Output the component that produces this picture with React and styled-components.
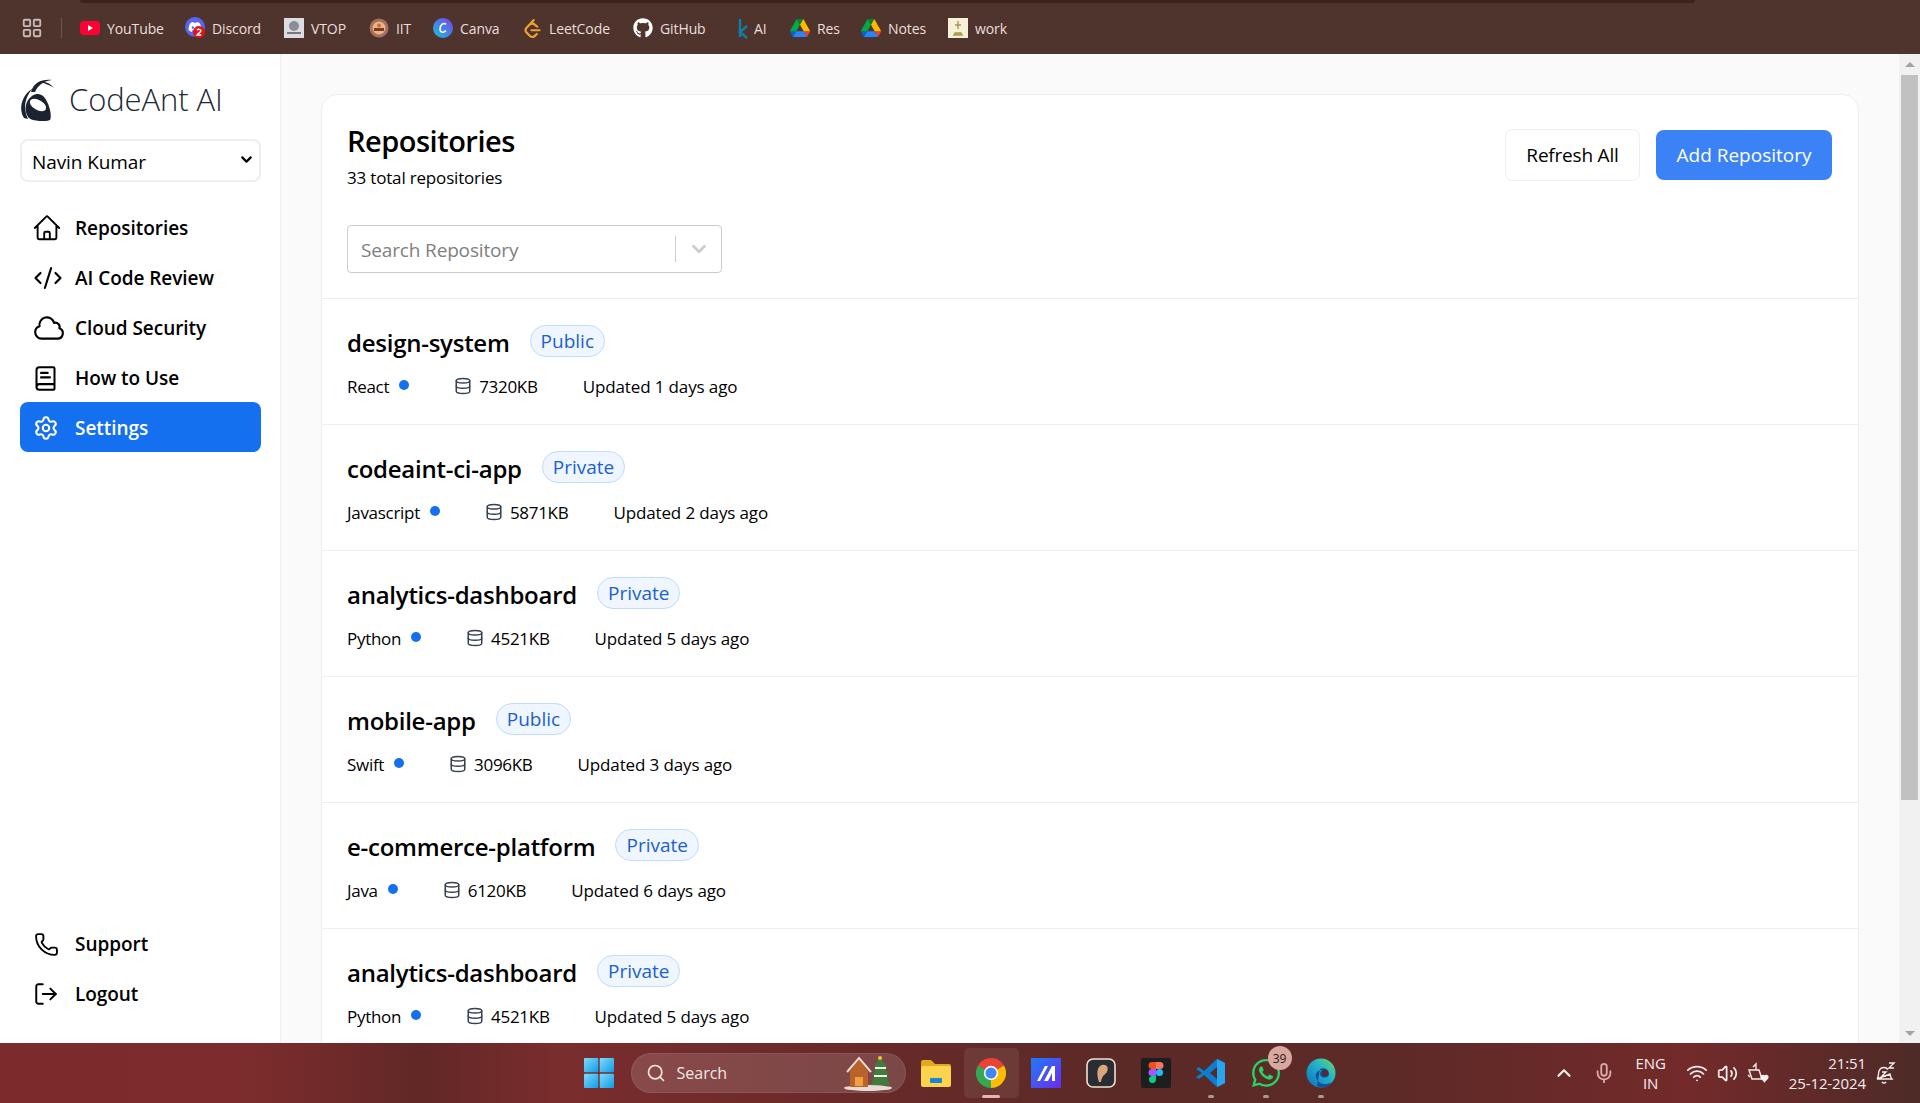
import React from "react";
import styled, { createGlobalStyle } from "styled-components";
import {
  CodeXml,
  BookText,
  Settings,
  Phone,
  LogOut,
  Database,
  ChevronUp,
  ChevronDown,
  Mic,
  Wifi,
  Volume2,
  Search,
  LayoutGrid,
} from "lucide-react";
import { HiOutlineHome, HiOutlineCloud } from "react-icons/hi2";
import { FaGithub, FaDiscord, FaWhatsapp } from "react-icons/fa";
import { SiLeetcode } from "react-icons/si";

const FONT = `"Open Sans", "Noto Sans", "Liberation Sans", sans-serif`;

const GlobalStyle = createGlobalStyle`
  html, body {
    margin: 0;
    height: 100%;
    overflow: hidden;
    font-family: ${FONT};
    color: #000;
  }
  * { box-sizing: border-box; }
`;

const Page = styled.div`
  display: flex;
  flex-direction: column;
  width: 100vw;
  height: 100vh;
  overflow: hidden;
`;

/* browser bookmarks bar */
const TopBar = styled.div`
  position: relative;
  flex: 0 0 54px;
  display: flex;
  align-items: center;
  padding: 2px 0 0 21px;
  background: #4f342e;
`;

const TabEdge = styled.div`
  position: absolute;
  top: 0;
  left: 80px;
  width: 1615px;
  height: 3px;
  background: #3a221d;
  border-radius: 0 0 6px 6px;
`;

const AppsDivider = styled.div`
  width: 1px;
  height: 20px;
  margin: 0 18px 0 18px;
  background: #6e5650;
`;

const Bookmark = styled.div`
  flex: 0 0 ${(p) => p.$w}px;
  display: flex;
  align-items: center;
  gap: ${(p) => p.$gap ?? 7}px;
  font-size: 14px;
  letter-spacing: -0.1px;
  color: #e9dfdc;
  white-space: nowrap;
`;

const BookmarkIcon = styled.span`
  flex: 0 0 20px;
  width: 20px;
  height: 20px;
  display: flex;
  align-items: center;
  justify-content: center;
`;

const Body = styled.div`
  flex: 1;
  min-height: 0;
  display: flex;
`;

const Sidebar = styled.aside`
  flex: 0 0 281px;
  display: flex;
  flex-direction: column;
  padding: 20px 19px 25px 20px;
  background: #fff;
  border-right: 1px solid #eeeeee;
`;

const Brand = styled.div`
  display: flex;
  align-items: center;
  gap: 11px;
  height: 50px;
  margin-left: -2px;
  font-size: 31px;
  font-weight: 300;
  letter-spacing: -0.1px;
  color: #1f2937;
`;

const SelectWrap = styled.div`
  position: relative;
  width: 241px;
  height: 43px;
  margin-top: 15px;
  margin-bottom: 20px;
`;

const AccountSelect = styled.select`
  appearance: none;
  width: 100%;
  height: 100%;
  padding: 2px 24px 0 10px;
  background: #fff;
  border: 2px solid #eeeeee;
  border-radius: 8px;
  font-family: ${FONT};
  font-size: 19px;
  letter-spacing: -0.1px;
  color: #000;
`;

const SelectArrow = styled.span`
  position: absolute;
  top: 12px;
  right: 6px;
  display: flex;
  pointer-events: none;
`;

const Nav = styled.nav`
  display: flex;
  flex-direction: column;
`;

const NavItem = styled.div`
  display: flex;
  align-items: center;
  height: 50px;
  padding: 2px 0 0 15px;
  border-radius: 8px;
  font-size: 19px;
  font-weight: 600;
  letter-spacing: -0.05px;
  color: ${(p) => (p.$active ? "#fff" : "#000")};
  background: ${(p) => (p.$active ? "#1570ef" : "transparent")};
`;

const NavIcon = styled.span`
  flex: 0 0 ${(p) => 40 + (p.$pull ?? 3)}px;
  margin-left: ${(p) => -(p.$pull ?? 3)}px;
  display: flex;
  align-items: center;
`;

const SidebarFoot = styled(Nav)`
  margin-top: auto;
`;

const Main = styled.main`
  flex: 1;
  min-width: 0;
  padding: 40px 40px 0 40px;
  background: #fafafa;
  overflow: hidden;
`;

const Card = styled.section`
  background: #fff;
  border: 1px solid #eeeeee;
  border-radius: 16px;
`;

const CardHeader = styled.header`
  padding: 28px 26px 25px 25px;
`;

const HeaderTop = styled.div`
  display: flex;
  justify-content: space-between;
  align-items: flex-start;
`;

const Title = styled.h1`
  margin: 0;
  font-size: 29px;
  line-height: 36px;
  font-weight: 600;
  letter-spacing: -0.5px;
`;

const Subtitle = styled.p`
  margin: 7px 0 0;
  font-size: 17px;
  line-height: 24px;
  letter-spacing: -0.18px;
`;

const Actions = styled.div`
  display: flex;
  align-items: center;
  gap: 16px;
  margin-top: 6px;
`;

const Button = styled.button`
  height: ${(p) => (p.$primary ? 50 : 52)}px;
  width: ${(p) => (p.$primary ? 176 : 135)}px;
  padding: 0;
  border: ${(p) => (p.$primary ? "none" : "1px solid #eeeeee")};
  border-radius: 8px;
  background: ${(p) => (p.$primary ? "#3b82f6" : "#fff")};
  color: ${(p) => (p.$primary ? "#fff" : "#000")};
  font-family: ${FONT};
  font-size: 19px;
  letter-spacing: ${(p) => (p.$primary ? "0" : "-0.2px")};
`;

const SearchBox = styled.div`
  display: flex;
  align-items: center;
  width: 375px;
  height: 48px;
  margin-top: 35px;
  padding: 2px 0 0 13px;
  border: 1px solid #cccccc;
  border-radius: 4px;
  font-size: 19px;
  letter-spacing: -0.15px;
  color: #808080;
`;

const SearchText = styled.span`
  flex: 1;
`;

const SearchSep = styled.span`
  width: 1px;
  height: 26px;
  margin-top: -2px;
  background: #cccccc;
`;

const SearchArrow = styled.span`
  flex: 0 0 45px;
  display: flex;
  justify-content: center;
  margin-top: -2px;
  color: #cccccc;
`;

const Row = styled.article`
  padding: 26px 25px 24px;
  border-top: 1px solid #eeeeee;
`;

const RowTitle = styled.div`
  display: flex;
  align-items: center;
  height: 32px;
  gap: 20px;
`;

const RepoName = styled.h2`
  margin: 2px 0 0;
  font-size: 24px;
  font-weight: 600;
  letter-spacing: -0.25px;
`;

const Badge = styled.span`
  display: inline-flex;
  align-items: center;
  height: 32px;
  padding: 0 10px;
  border: 1px solid #bfdbfe;
  border-radius: 16px;
  background: #eff6ff;
  color: #1d5fd0;
  font-size: 19px;
`;

const Meta = styled.div`
  display: flex;
  align-items: center;
  height: 28px;
  margin-top: 15px;
  gap: 45px;
  font-size: 17px;
  letter-spacing: -0.3px;
`;

const MetaPart = styled.span`
  display: inline-flex;
  align-items: center;
  gap: ${(p) => p.$gap || 10}px;
`;

const Updated = styled.span`
  letter-spacing: -0.13px;
`;

const Dot = styled.span`
  width: 10px;
  height: 10px;
  margin-top: -2px;
  border-radius: 50%;
  background: #1570ef;
`;

const Scrollbar = styled.div`
  flex: 0 0 21px;
  display: flex;
  flex-direction: column;
  align-items: center;
  background: #f1f1f1;
  padding: 8px 0 7px;
`;

const ScrollArrow = styled.div`
  width: 0;
  height: 0;
  border-left: 5px solid transparent;
  border-right: 5px solid transparent;
  border-${(p) => (p.$down ? "top" : "bottom")}: 5px solid #a3a3a3;
`;

const ScrollThumb = styled.div`
  width: 17px;
  height: 725px;
  margin-top: 8px;
  margin-bottom: auto;
  background: #c1c1c1;
`;

/* windows taskbar */
const Taskbar = styled.footer`
  flex: 0 0 60px;
  display: grid;
  grid-template-columns: 1fr auto 1fr;
  align-items: center;
  background: linear-gradient(
    90deg,
    #7b2b2b 0%,
    #7c2c2c 13%,
    #612826 22%,
    #7a2d2d 29%,
    #682a29 45%,
    #5b2a27 58%,
    #5c2a27 72%,
    #732a2a 88%,
    #4d2b28 100%
  );
  color: #fff;
`;

const TaskCenter = styled.div`
  grid-column: 2;
  display: flex;
  align-items: center;
  height: 60px;
  padding-left: 12px;
`;

const TaskSearch = styled.div`
  display: flex;
  align-items: center;
  width: 275px;
  height: 40px;
  margin: 0 3px 0 17px;
  padding: 0 12px 0 14px;
  gap: 11px;
  border-radius: 20px;
  background: rgba(255, 255, 255, 0.14);
  border: 1px solid rgba(255, 255, 255, 0.08);
  font-size: 16px;
  color: #f3e6e4;
`;

const TaskSearchText = styled.span`
  flex: 1;
`;

const TaskSlot = styled.div`
  position: relative;
  flex: 0 0 55px;
  height: 50px;
  display: flex;
  align-items: center;
  justify-content: center;
  border-radius: 5px;
  background: ${(p) => (p.$active ? "rgba(255,255,255,0.08)" : "transparent")};
`;

const RunMark = styled.span`
  position: absolute;
  bottom: 0;
  left: 50%;
  transform: translateX(-50%);
  width: ${(p) => (p.$active ? 18 : 6)}px;
  height: 3px;
  border-radius: 2px;
  background: ${(p) => (p.$active ? "#e6b5ae" : "#a89a98")};
`;

const CountBadge = styled.span`
  position: absolute;
  top: -2px;
  right: 2px;
  width: 24px;
  height: 24px;
  display: flex;
  align-items: center;
  justify-content: center;
  border-radius: 50%;
  background: #d9a79f;
  color: #2a1a18;
  font-size: 12px;
`;

const Tray = styled.div`
  grid-column: 3;
  display: flex;
  align-items: center;
  justify-content: flex-end;
  padding-right: 24px;
  color: #f5eeee;
`;

const TrayIcon = styled.span`
  display: flex;
  align-items: center;
  justify-content: center;
  margin-left: ${(p) => p.$ml || 0}px;
`;

const TrayText = styled.div`
  display: flex;
  flex-direction: column;
  align-items: ${(p) => p.$align || "center"};
  margin-left: ${(p) => p.$ml || 0}px;
  font-size: 15px;
  line-height: 20px;
  letter-spacing: -0.1px;
`;

const DriveIcon = () => (
  <svg width="20" height="18" viewBox="0 0 87.3 78">
    <path d="m6.6 66.85 3.85 6.65c.8 1.4 1.95 2.5 3.3 3.3l13.75-23.8h-27.5c0 1.55.4 3.1 1.2 4.5z" fill="#0066da" />
    <path d="m43.65 25-13.75-23.8c-1.35.8-2.5 1.9-3.3 3.3l-25.4 44a9.06 9.06 0 0 0 -1.2 4.5h27.5z" fill="#00ac47" />
    <path d="m73.55 76.8c1.35-.8 2.5-1.9 3.3-3.3l1.6-2.75 7.65-13.25c.8-1.4 1.2-2.95 1.2-4.5h-27.502l5.852 11.5z" fill="#ea4335" />
    <path d="m43.65 25 13.75-23.8c-1.35-.8-2.9-1.2-4.5-1.2h-18.5c-1.6 0-3.15.45-4.5 1.2z" fill="#00832d" />
    <path d="m59.8 53h-32.3l-13.75 23.8c1.35.8 2.9 1.2 4.5 1.2h50.8c1.6 0 3.15-.45 4.5-1.2z" fill="#2684fc" />
    <path d="m73.4 26.5-12.7-22c-.8-1.4-1.95-2.5-3.3-3.3l-13.75 23.8 16.15 28h27.45c0-1.55-.4-3.1-1.2-4.5z" fill="#ffba00" />
  </svg>
);

const bookmarks = [
  {
    name: "YouTube",
    w: 105,
    icon: (
      <svg width="20" height="20" viewBox="0 0 20 20">
        <rect y="3" width="20" height="14" rx="4" fill="#ff0033" />
        <polygon points="8,7 8,13 13,10" fill="#fff" />
      </svg>
    ),
  },
  {
    name: "Discord",
    w: 99,
    icon: (
      <svg width="20" height="22" viewBox="0 0 20 22">
        <circle cx="10" cy="10" r="10" fill="#5865f2" />
        <FaDiscord x="3" y="3" size="14" color="#fff" />
        <circle cx="14" cy="15" r="6" fill="#e01414" />
        <path d="M12 13.2c.6-1.3 4-1.2 4 .6 0 1.4-3 2.4-4 4.2h4.2" fill="none" stroke="#fff" strokeWidth="1.4" />
      </svg>
    ),
  },
  {
    name: "VTOP",
    w: 85,
    icon: (
      <svg width="20" height="20" viewBox="0 0 20 20">
        <rect width="20" height="20" fill="#dcdce2" />
        <circle cx="10" cy="8" r="5" fill="#8d8d9a" />
        <rect x="3" y="14" width="14" height="2" fill="#777784" />
      </svg>
    ),
  },
  {
    name: "IIT",
    w: 64,
    icon: (
      <svg width="20" height="20" viewBox="0 0 20 20">
        <circle cx="10" cy="10" r="9.5" fill="#a5705c" />
        <circle cx="10" cy="10" r="6.5" fill="#e8b48a" />
        <rect x="5" y="10" width="10" height="3" fill="#7a3b20" />
        <circle cx="10" cy="7.5" r="2" fill="#d0702a" />
      </svg>
    ),
  },
  {
    name: "Canva",
    w: 89,
    icon: (
      <svg width="20" height="20" viewBox="0 0 20 20">
        <defs>
          <linearGradient id="canvaFill" x1="0" y1="1" x2="1" y2="0">
            <stop offset="0" stopColor="#17c3d6" />
            <stop offset="1" stopColor="#7b3ff2" />
          </linearGradient>
        </defs>
        <circle cx="10" cy="10" r="10" fill="url(#canvaFill)" />
        <path d="M13 6.5C11 3.8 7 6.8 7 11c0 3.6 3.5 4.2 6 1.500" fill="none" stroke="#fff" strokeWidth="1.5" />
      </svg>
    ),
  },
  {
    name: "LeetCode",
    w: 111,
    icon: <SiLeetcode size={19} color="#f0a030" />,
  },
  { name: "GitHub", w: 100, icon: <FaGithub size={20} color="#fff" /> },
  {
    name: "AI",
    w: 57,
    icon: (
      <svg width="20" height="22" viewBox="0 0 20 22">
        <path d="M7 2v18M14 9l-7 6 7 6" fill="none" stroke="#0f7fa8" strokeWidth="2.4" />
      </svg>
    ),
    gap: 1,
  },
  { name: "Res", w: 71, icon: <DriveIcon /> },
  { name: "Notes", w: 87, icon: <DriveIcon /> },
  {
    name: "work",
    w: 70,
    icon: (
      <svg width="20" height="20" viewBox="0 0 20 20">
        <rect width="20" height="20" fill="#f6f0d8" />
        <path d="M10 3v8M7 7h6M7 15h6l1 2H6z" stroke="#a8964e" strokeWidth="1.4" fill="#c9b877" />
      </svg>
    ),
  },
];

const navItems = [
  { label: "Repositories", icon: <HiOutlineHome size={30} /> },
  { label: "AI Code Review", icon: <CodeXml size={30} strokeWidth={1.7} />, pull: 2 },
  { label: "Cloud Security", icon: <HiOutlineCloud size={34} />, pull: 3 },
  { label: "How to Use", icon: <BookText size={27} strokeWidth={1.8} /> },
  { label: "Settings", icon: <Settings size={26} strokeWidth={1.9} />, pull: 2, active: true },
];

const repos = [
  { name: "design-system", vis: "Public", lang: "React", size: "7320KB", when: "1 days" },
  { name: "codeaint-ci-app", vis: "Private", lang: "Javascript", size: "5871KB", when: "2 days" },
  { name: "analytics-dashboard", vis: "Private", lang: "Python", size: "4521KB", when: "5 days" },
  { name: "mobile-app", vis: "Public", lang: "Swift", size: "3096KB", when: "3 days" },
  { name: "e-commerce-platform", vis: "Private", lang: "Java", size: "6120KB", when: "6 days" },
  { name: "analytics-dashboard", vis: "Private", lang: "Python", size: "4521KB", when: "5 days" },
];

const AntLogo = () => (
  <svg width="40" height="43" viewBox="18 78 40 43" fill="#1b2230">
    <path d="M26 112C24 103 30 95 37 94c7-1 11 8 13 16 1 4 1 8 0 10-6 2-12 1-17 0-4-1-6-4-7-8z" />
    <ellipse cx="38" cy="105" rx="9" ry="5" fill="#fff" transform="rotate(30 38 105)" />
    <path d="M24 118C18 108 22 95 33 88c-7 8-11 18-5 31z" />
    <path d="M31 92c3-10 11-13 21-12-8 1-14 5-17 12z" />
    <path d="M40 82c5-1 10 1 14 6-4-3-8-4-14-6z" />
  </svg>
);

const WindowsLogo = () => (
  <svg width="30" height="30" viewBox="0 0 30 30">
    <defs>
      <linearGradient id="winFill" x1="0" y1="0" x2="1" y2="1">
        <stop offset="0" stopColor="#7fdcf8" />
        <stop offset="1" stopColor="#0f9aeb" />
      </linearGradient>
    </defs>
    <rect width="14.3" height="14.3" rx="1" fill="url(#winFill)" />
    <rect x="15.7" width="14.3" height="14.3" rx="1" fill="url(#winFill)" />
    <rect y="15.7" width="14.3" height="14.3" rx="1" fill="url(#winFill)" />
    <rect x="15.7" y="15.7" width="14.3" height="14.3" rx="1" fill="url(#winFill)" />
  </svg>
);

const XmasDecor = () => (
  <svg width="50" height="36" viewBox="0 0 50 36">
    <ellipse cx="25" cy="33" rx="24" ry="3" fill="#e8dcd6" />
    <path d="M7 16L16 5l9 11v16H7z" fill="#b9622a" />
    <path d="M4 17L16 3l12 14" fill="none" stroke="#f1d9c8" strokeWidth="2" />
    <rect x="12" y="22" width="8" height="9" fill="#f0a040" />
    <path d="M37 2l7 10h-3l5 8h-3l4 10H28l4-10h-3l5-8h-3z" fill="#3f7d3a" />
    <path d="M32 13h11M31 21h13" stroke="#f3f1ee" strokeWidth="2" />
    <circle cx="37" cy="3" r="2" fill="#f2c230" />
  </svg>
);

const FolderIcon = () => (
  <svg width="30" height="28" viewBox="0 0 30 28">
    <path d="M0 3a2 2 0 012-2h8l4 4h14a2 2 0 012 2v3H0z" fill="#e3a81e" />
    <rect y="7" width="30" height="21" rx="2" fill="#fcd34d" />
    <rect x="9" y="19" width="12" height="5" rx="1" fill="#1b85d6" />
  </svg>
);

const ChromeIcon = () => (
  <svg width="30" height="30" viewBox="0 0 30 30">
    <g fill="none" strokeWidth="14" transform="rotate(-150 15 15)">
      <circle cx="15" cy="15" r="8" stroke="#ea4335" pathLength="3" strokeDasharray="1 2" />
      <circle cx="15" cy="15" r="8" stroke="#fbbc04" pathLength="3" strokeDasharray="1 2" strokeDashoffset="-1" />
      <circle cx="15" cy="15" r="8" stroke="#34a853" pathLength="3" strokeDasharray="1 2" strokeDashoffset="-2" />
    </g>
    <circle cx="15" cy="15" r="7.2" fill="#fff" />
    <circle cx="15" cy="15" r="5.6" fill="#4285f4" />
  </svg>
);

const CopilotSquare = () => (
  <svg width="30" height="30" viewBox="0 0 30 30">
    <defs>
      <linearGradient id="mFill" x1="0" y1="0" x2="1" y2="1">
        <stop offset="0" stopColor="#1f7cf5" />
        <stop offset="1" stopColor="#6a2cf0" />
      </linearGradient>
    </defs>
    <rect width="30" height="30" fill="url(#mFill)" />
    <path d="M6 23L14 8h3l-8 15zM13 23l8-15h3v15h-3v-8l-4 8z" fill="#fff" />
  </svg>
);

const PenApp = () => (
  <svg width="30" height="30" viewBox="0 0 30 30">
    <rect x="1" y="1" width="28" height="28" rx="6" fill="#2a2d33" stroke="#f3e2cf" strokeWidth="1.6" />
    <path d="M13 24c-3-8-2-16 3-17 5-1 7 3 5 7-2 3-5 3-6 10z" fill="#d9a77b" />
  </svg>
);

const FigmaApp = () => (
  <svg width="30" height="30" viewBox="0 0 30 30">
    <rect width="30" height="30" rx="2" fill="#1e1e1e" />
    <path d="M11 4h4v7h-4a3.500 3.500 0 010-7z" fill="#f24e1e" />
    <path d="M15 4h4a3.500 3.500 0 010 7h-4z" fill="#ff7262" />
    <path d="M11 11h4v7h-4a3.500 3.500 0 010-7z" fill="#a259ff" />
    <circle cx="18.5" cy="14.5" r="3.5" fill="#1abcfe" />
    <path d="M11 18h4v3.500a3.500 3.500 0 11-4-3.500z" fill="#0acf83" />
  </svg>
);

const VsCodeIcon = () => (
  <svg width="30" height="30" viewBox="0 0 30 30">
    <path d="M21 1l8 4v20l-8 4-13-12-5 4-3-2 6-4-6-4 3-2 5 4z" fill="#0a7fd0" />
    <path d="M21 1l8 4v20l-8 4z" fill="#2aa4ee" />
    <path d="M21 9l-7 6 7 6z" fill="#5a2826" />
  </svg>
);

const EdgeIcon = () => (
  <svg width="30" height="30" viewBox="0 0 30 30">
    <defs>
      <linearGradient id="edgeFill" x1="0" y1="1" x2="1" y2="0">
        <stop offset="0" stopColor="#0a6fc4" />
        <stop offset="0.6" stopColor="#25b4c8" />
        <stop offset="1" stopColor="#6fdc5c" />
      </linearGradient>
    </defs>
    <circle cx="15" cy="15" r="14.5" fill="url(#edgeFill)" />
    <path d="M14 11c5-2 9 1 9 5s-5 4-7 3c-3-2-2-6 0-7-5 0-7 4-6 8 2 6 10 8 16 4-3 5-10 6-15 4" fill="#0d4f9c" />
    <circle cx="19" cy="15" r="3" fill="#5a2826" />
  </svg>
);

const SyncTray = () => (
  <svg width="22" height="22" viewBox="0 0 22 22" fill="none" stroke="currentColor" strokeWidth="1.4">
    <path d="M2 8l3 9h10l-3-9z" />
    <path d="M6 5l3-3v6M1 13l2 2" />
    <path d="M14 15c1-2 3-2 3.500-.5.500-1.500 3-1.500 3.500.5 0 2-3 3.500-3.500 4.500-.5-1-3.500-2.500-3.500-4.500z" fill="currentColor" />
  </svg>
);

const SnoozeBell = () => (
  <svg width="22" height="24" viewBox="0 0 22 24" fill="none" stroke="currentColor" strokeWidth="1.4">
    <path d="M3 18c2-2 1-5 2-8 1-2.500 3-3.500 5-3.500s3 .5 4 2M16 13c.3 2 .7 3.500 2 5H3z" />
    <path d="M8 21c1 1.500 3 1.500 4 0M8 11h4l-4 4h4M15 2h5l-5 5h5" />
  </svg>
);

const RepoRow = ({ repo }) => (
  <Row>
    <RowTitle>
      <RepoName>{repo.name}</RepoName>
      <Badge>{repo.vis}</Badge>
    </RowTitle>
    <Meta>
      <MetaPart>
        {repo.lang}
        <Dot />
      </MetaPart>
      <MetaPart $gap={7}>
        <Database size={18} strokeWidth={2} color="#374151" />
        {repo.size}
      </MetaPart>
      <Updated>Updated {repo.when} ago</Updated>
    </Meta>
  </Row>
);

export default function App() {
  return (
    <Page>
      <GlobalStyle />
      <TopBar>
        <TabEdge />
        <LayoutGrid size={22} color="#c9bcb8" strokeWidth={2} />
        <AppsDivider />
        {bookmarks.map((b) => (
          <Bookmark key={b.name} $w={b.w} $gap={b.gap}>
            <BookmarkIcon>{b.icon}</BookmarkIcon>
            {b.name}
          </Bookmark>
        ))}
      </TopBar>
      <Body>
        <Sidebar>
          <Brand>
            <AntLogo />
            CodeAnt AI
          </Brand>
          <SelectWrap>
            <AccountSelect defaultValue="Navin Kumar">
              <option>Navin Kumar</option>
            </AccountSelect>
            <SelectArrow><ChevronDown size={17} strokeWidth={3} /></SelectArrow>
          </SelectWrap>
          <Nav>
            {navItems.map((n) => (
              <NavItem key={n.label} $active={n.active}>
                <NavIcon $pull={n.pull}>{n.icon}</NavIcon>
                {n.label}
              </NavItem>
            ))}
          </Nav>
          <SidebarFoot>
            <NavItem>
              <NavIcon $pull={1}><Phone size={25} strokeWidth={1.8} /></NavIcon>
              Support
            </NavItem>
            <NavItem>
              <NavIcon $pull={2}><LogOut size={26} strokeWidth={1.8} /></NavIcon>
              Logout
            </NavItem>
          </SidebarFoot>
        </Sidebar>
        <Main>
          <Card>
            <CardHeader>
              <HeaderTop>
                <div>
                  <Title>Repositories</Title>
                  <Subtitle>33 total repositories</Subtitle>
                </div>
                <Actions>
                  <Button>Refresh All</Button>
                  <Button $primary>Add Repository</Button>
                </Actions>
              </HeaderTop>
              <SearchBox>
                <SearchText>Search Repository</SearchText>
                <SearchSep />
                <SearchArrow><ChevronDown size={22} strokeWidth={3} /></SearchArrow>
              </SearchBox>
            </CardHeader>
            {repos.map((r, i) => (
              <RepoRow key={i} repo={r} />
            ))}
          </Card>
        </Main>
        <Scrollbar>
          <ScrollArrow />
          <ScrollThumb />
          <ScrollArrow $down />
        </Scrollbar>
      </Body>
      <Taskbar>
        <TaskCenter>
          <WindowsLogo />
          <TaskSearch>
            <Search size={20} color="#f3e6e4" />
            <TaskSearchText>Search</TaskSearchText>
            <XmasDecor />
          </TaskSearch>
          <TaskSlot><FolderIcon /></TaskSlot>
          <TaskSlot $active><ChromeIcon /><RunMark $active /></TaskSlot>
          <TaskSlot><CopilotSquare /></TaskSlot>
          <TaskSlot><PenApp /></TaskSlot>
          <TaskSlot><FigmaApp /></TaskSlot>
          <TaskSlot><VsCodeIcon /><RunMark /></TaskSlot>
          <TaskSlot>
            <FaWhatsapp size={32} color="#25d366" />
            <CountBadge>39</CountBadge>
            <RunMark />
          </TaskSlot>
          <TaskSlot><EdgeIcon /><RunMark /></TaskSlot>
        </TaskCenter>
        <Tray>
          <TrayIcon><ChevronUp size={22} strokeWidth={2.4} /></TrayIcon>
          <TrayIcon $ml={18}><Mic size={22} color="#e0aaa6" /></TrayIcon>
          <TrayText $ml={20}>
            <span>ENG</span>
            <span>IN</span>
          </TrayText>
          <TrayIcon $ml={20}><Wifi size={22} /></TrayIcon>
          <TrayIcon $ml={9}><Volume2 size={21} /></TrayIcon>
          <TrayIcon $ml={9}><SyncTray /></TrayIcon>
          <TrayText $ml={20} $align="flex-end">
            <span>21:51</span>
            <span>25-12-2024</span>
          </TrayText>
          <TrayIcon $ml={8}><SnoozeBell /></TrayIcon>
        </Tray>
      </Taskbar>
    </Page>
  );
}
